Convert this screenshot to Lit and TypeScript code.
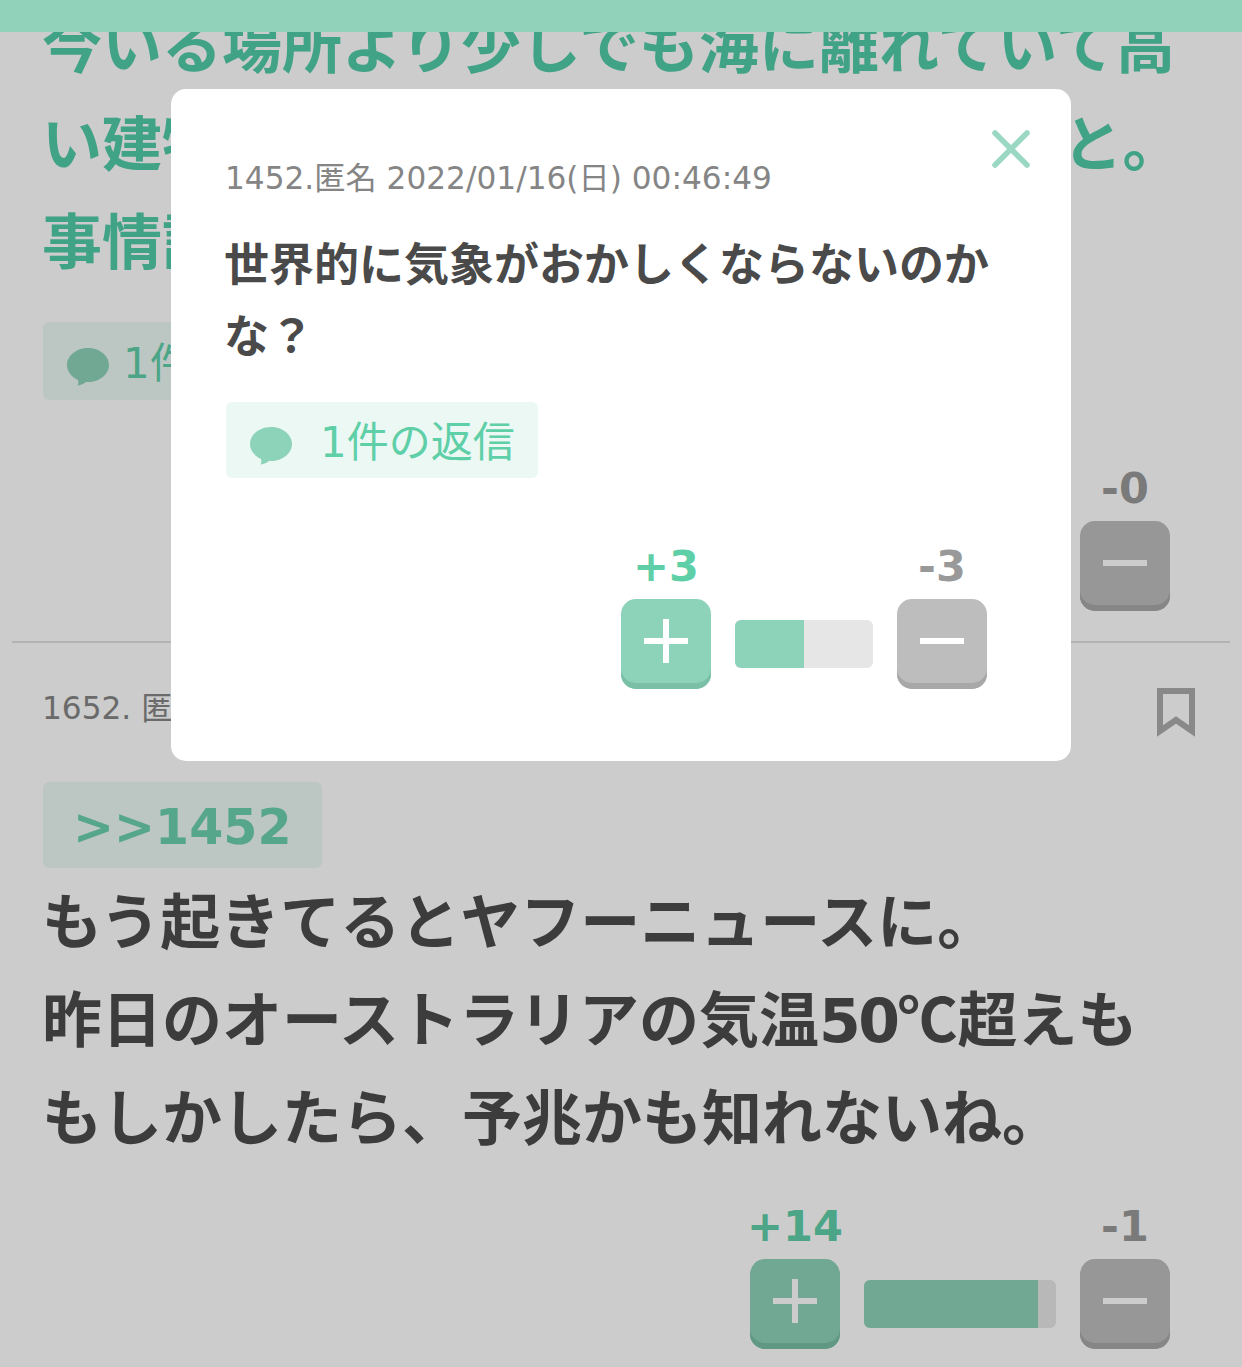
import { LitElement, html, css, svg } from "lit";
import { customElement } from "lit/decorators.js";

const bubble = svg`<svg class="bubble" viewBox="0 0 42 38"><path d="M21 0C32.600 0 42 7.600 42 17C42 26.400 32.600 34 21 34C20 34 19.500 34 19 33.900C17 35.500 14 37 10.500 37.500C11.500 35.500 11.500 33.500 11 32C4.500 29 0 23.500 0 17C0 7.600 9.400 0 21 0Z"/></svg>`;

@customElement("app-root")
export class AppRoot extends LitElement {
  static styles = css`
    :host {
      display: block;
      position: relative;
      width: 1242px;
      height: 1367px;
      overflow: hidden;
      background: #fff;
      font-family: "DejaVu Sans", "Noto Sans CJK JP", sans-serif;
      color: #4c4c4c;
    }
    .topbar { position: absolute; z-index: 3; left: 0; top: 0; width: 100%; height: 32px; background: #91d2ba; }
    .overlay { position: absolute; z-index: 1; inset: 0; background: rgba(0, 0, 0, 0.2); }
    .modal {
      position: absolute; z-index: 2; left: 171px; top: 89px; width: 900px; box-sizing: border-box;
      padding: 69px 55px 72px; background: #fff; border-radius: 15px;
    }
    .close { position: absolute; left: 820px; top: 40px; width: 40px; height: 40px; stroke: #9ad8c4; stroke-width: 5.5; stroke-linecap: round; fill: none; }
    .post1, .post2 { box-sizing: border-box; }
    .post1 { margin: 0 12px; padding: 0 32px 30px 31px; border-bottom: 2px solid #e0e0e0; }
    .post2 { padding: 45px 72px 0 43px; }
    .lead { font-size: 60px; line-height: 98px; font-weight: 700; color: #52cca8; margin: -2px 0 0 -1px; }
    .body { font-size: 60px; line-height: 98px; font-weight: 700; color: #4c4c4c; margin: 6px 0 0 -1px; white-space: nowrap; }
    .cjk { font-family: "Noto Sans CJK JP", sans-serif; line-height: 0; }
    .num { letter-spacing: -2.500px; line-height: 0; }
    .modal-text { font-size: 45px; line-height: 72px; font-weight: 700; color: #4a4a4a; margin: 32px 0 0 -2px; }
    .meta { font-size: 31.200px; line-height: 40px; color: #858585; font-weight: 400; margin-left: -1px; }
    .meta-row { display: flex; justify-content: space-between; align-items: flex-start; margin-right: -25px; }
    .bookmark { width: 38px; height: 49px; fill: none; stroke: #acacac; stroke-width: 6; }
    .reply { display: inline-flex; align-items: center; box-sizing: border-box; height: 78px; padding: 0 24px 4px; background: #ecf8f4; border-radius: 6px; font-size: 42px; font-weight: 400; color: #5fcfa8; margin-top: 30px; white-space: nowrap; }
    .modal .reply { height: 76px; margin-top: 28px; width: 312px; display: flex; }
    .bubble { width: 42px; height: 38px; fill: #8dd3ba; margin: 16px 14px 0 0; flex: none; }
    .modal .bubble { margin-right: 28px; }
    .anchor { display: inline-flex; align-items: center; height: 86px; padding: 4px 30px 0 30px; box-sizing: border-box; margin-top: 45px; background: #ecf8f4; border-radius: 6px; font-size: 49px; font-weight: 700; color: #6bd0ae; }
    .vote { display: flex; justify-content: flex-end; align-items: flex-end; gap: 24px; margin-top: 63px; }
    .post1 .vote { margin-right: 28px; }
    .post2 .vote { margin-top: 33px; }
    .modal .vote { margin-right: 29px; }
    .col { width: 90px; display: flex; flex-direction: column; align-items: center; }
    .count { height: 50px; line-height: 51px; margin-bottom: 8px; font-size: 43px; font-weight: 700; white-space: nowrap; }
    .count.up { color: #5fcfa8; }
    .count.down { color: #999; }
    .btn { width: 90px; height: 90px; border-radius: 15px; display: flex; padding-bottom: 6px; box-sizing: border-box; align-items: center; justify-content: center; }
    .btn.up { background: #8dd3ba; box-shadow: inset 0 -6px 0 #7abfa6; }
    .btn.down { background: #bdbdbd; box-shadow: inset 0 -6px 0 #a8a8a8; }
    .btn svg { width: 44px; height: 44px; stroke: #fff; stroke-width: 6; }
    .bar { display: flex; height: 48px; border-radius: 6px; overflow: hidden; background: #e6e6e6; margin-bottom: 21px; }
    .fill { background: #8dd3ba; }
  `;

  private vote(up: string, down: string, barW: number, pct: number) {
    return html`<div class="vote">
      <div class="col"><div class="count up">${up}</div>
        <div class="btn up"><svg viewBox="0 0 44 44"><path d="M0 22H44M22 0V44"/></svg></div></div>
      <div class="bar" style="width:${barW}px"><div class="fill" style="width:${pct}%"></div></div>
      <div class="col"><div class="count down">${down}</div>
        <div class="btn down"><svg viewBox="0 0 44 44"><path d="M0 22H44"/></svg></div></div>
    </div>`;
  }

  render() {
    return html`
      <div class="page">
        <section class="post1">
          <p class="lead">今いる場所より少しでも海に離れていて高い建物の上階に避難するようにすること。事情許す限りで。</p>
          <div class="reply">${bubble}1件の返信</div>
          ${this.vote("+0", "-0", 192, 100)}
        </section>
        <section class="post2">
          <div class="meta-row">
            <div class="meta">1652. 匿名 2022/01/16(日) 01:12:08</div>
            <svg class="bookmark" viewBox="0 0 38 49"><path d="M3 3H35V43L19 32L3 43Z"/></svg>
          </div>
          <div class="anchor">&gt;&gt;1452</div>
          <p class="body">もう起きてるとヤフーニュースに。<br />昨日のオーストラリアの気温<span class="num">50</span><span class="cjk">℃</span>超えも<br />もしかしたら、予兆かも知れないね。</p>
          ${this.vote("+14", "-1", 192, 90.8)}
        </section>
      </div>
      <div class="overlay"></div>
      <div class="topbar"></div>
      <div class="modal">
        <svg class="close" viewBox="0 0 40 40"><path d="M4 4L36 36M36 4L4 36"/></svg>
        <div class="meta">1452.匿名 2022/01/16(日) 00:46:49</div>
        <p class="modal-text">世界的に気象がおかしくならないのかな？</p>
        <div class="reply">${bubble}1件の返信</div>
        ${this.vote("+3", "-3", 138, 50)}
      </div>
    `;
  }
}
